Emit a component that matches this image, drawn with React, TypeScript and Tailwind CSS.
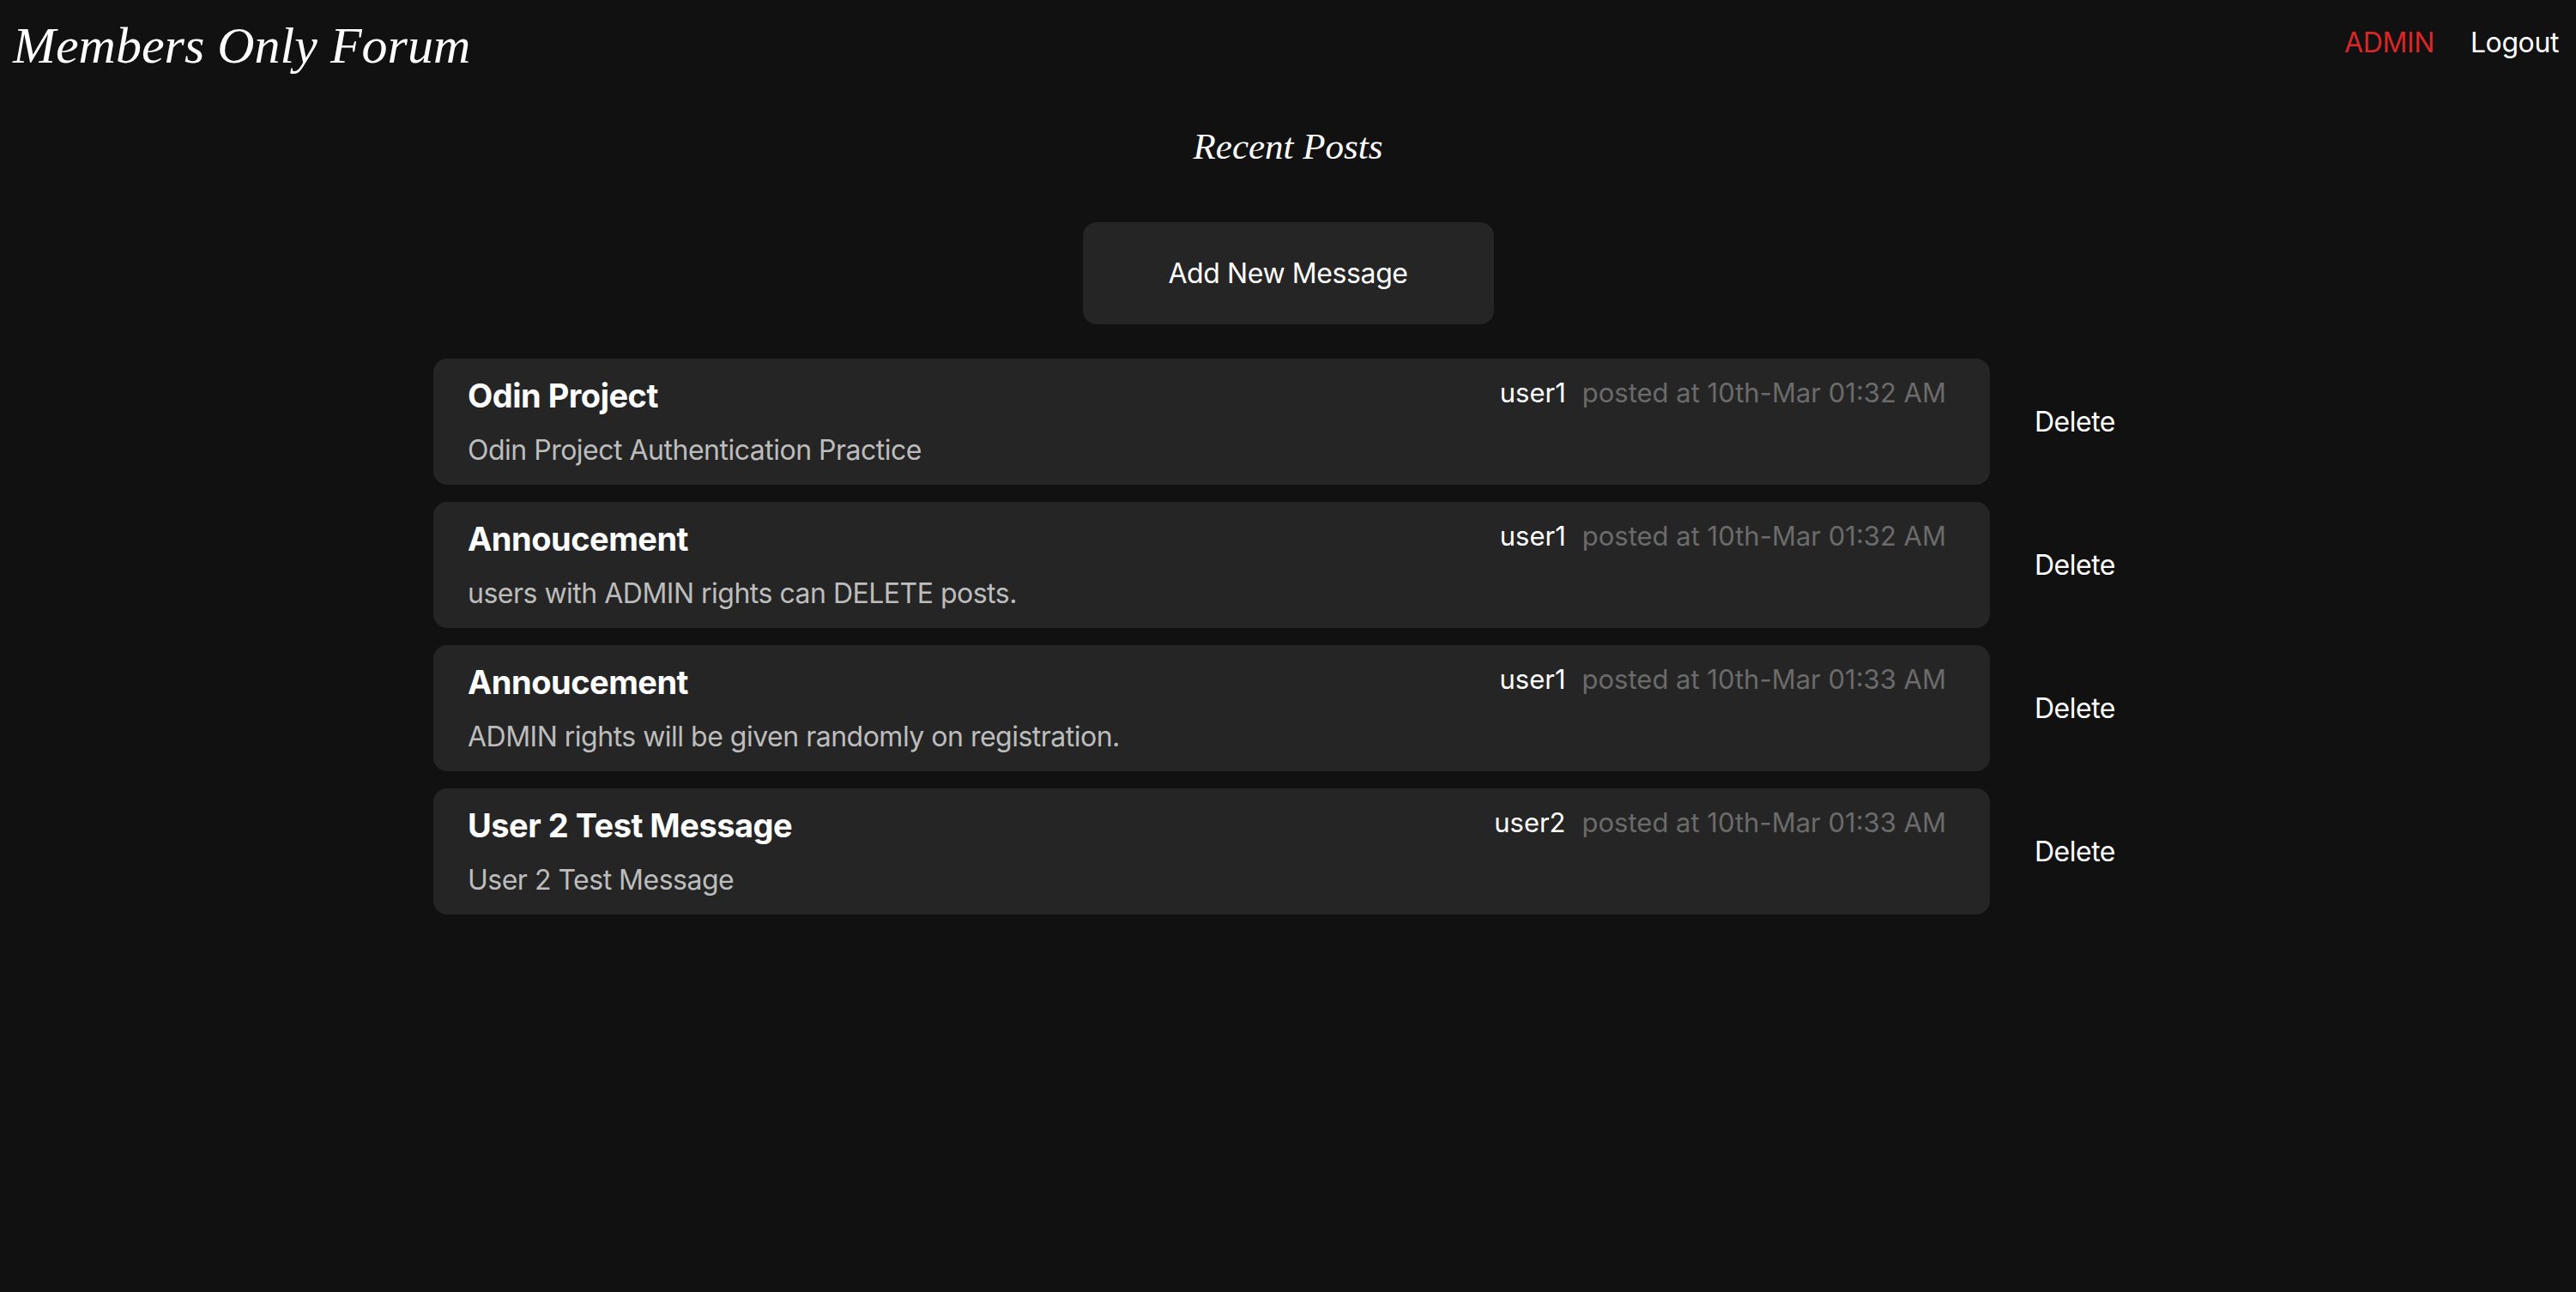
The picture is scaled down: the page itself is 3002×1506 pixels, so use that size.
const posts = [
  {
    title: "Odin Project",
    body: "Odin Project Authentication Practice",
    user: "user1",
    time: "10th-Mar 01:32 AM",
  },
  {
    title: "Annoucement",
    body: "users with ADMIN rights can DELETE posts.",
    user: "user1",
    time: "10th-Mar 01:32 AM",
  },
  {
    title: "Annoucement",
    body: "ADMIN rights will be given randomly on registration.",
    user: "user1",
    time: "10th-Mar 01:33 AM",
  },
  {
    title: "User 2 Test Message",
    body: "User 2 Test Message",
    user: "user2",
    time: "10th-Mar 01:33 AM",
  },
];

const serif = "font-['Liberation_Serif',serif] italic";

export default function App() {
  return (
    <div className="min-h-screen bg-[#111111] text-white font-['Inter',sans-serif]">
      {/* Header */}
      <header className="flex items-start justify-between px-[15px]">
        <h1 className={`${serif} mt-[23px] text-[60px] leading-none font-normal`}>
          Members Only Forum
        </h1>
        <nav className="mt-[34px] mr-[5px] flex gap-[42px] text-[32px] leading-none tracking-[-0.4px]">
          <a className="text-[#dc2626]">ADMIN</a>
          <a className="text-white">Logout</a>
        </nav>
      </header>

      <main className="flex flex-col items-center">
        <h2 className={`${serif} mt-[66px] text-[43px] leading-none font-normal`}>
          Recent Posts
        </h2>

        <button className="mt-[67px] flex h-[119px] w-[479px] items-center justify-center rounded-[16px] bg-[#252525] text-[32px] leading-none tracking-[-0.4px] text-white">
          Add New Message
        </button>

        {/* Posts */}
        <div className="mt-[40px] flex w-[1992px] flex-col gap-[20px]">
          {posts.map((p, i) => (
            <div key={i} className="flex items-center">
              <div className="w-[1814px] rounded-[16px] bg-[#252525] pt-[24px] pb-[24px] pl-[40px] pr-[51px]">
                <div className="flex items-start justify-between">
                  <h3 className="text-[38px] leading-none font-bold tracking-[-0.5px] text-white">
                    {p.title}
                  </h3>
                  <div className="flex gap-[19px] text-[31px] leading-none">
                    <span className="text-white">{p.user}</span>
                    <span className="text-[#6b6b6b]">posted at {p.time}</span>
                  </div>
                </div>
                <p className="mt-[29px] text-[32px] leading-none tracking-[-0.5px] text-[#bdbdbd]">
                  {p.body}
                </p>
              </div>
              <button className="ml-[52px] text-[32px] leading-none tracking-[-0.5px] text-white">
                Delete
              </button>
            </div>
          ))}
        </div>
      </main>
    </div>
  );
}
